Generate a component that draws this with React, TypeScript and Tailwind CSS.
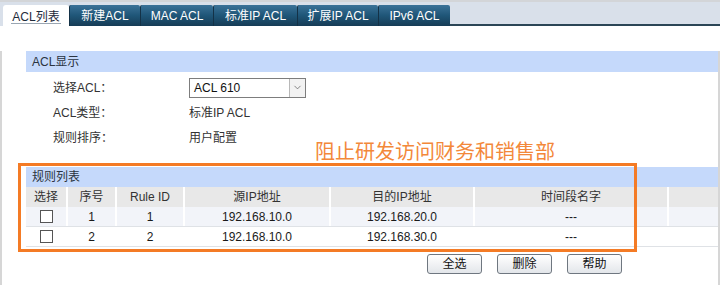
import { ChevronDown } from "lucide-react";

const tabs = ["新建ACL", "MAC ACL", "标准IP ACL", "扩展IP ACL", "IPv6 ACL"];
const tabWidths = ["w-[71px]", "w-[73px]", "w-[84px]", "w-[81px]", "w-[72px]"];

const cols = [
  { name: "选择", w: "w-[40px]" },
  { name: "序号", w: "w-[49px]" },
  { name: "Rule ID", w: "w-[68px]" },
  { name: "源IP地址", w: "w-[146px]" },
  { name: "目的IP地址", w: "w-[144px]" },
  { name: "时间段名字", w: "w-[194px]" },
  { name: "", w: "flex-1" },
];

const rules = [
  { id: 1, src: "192.168.10.0", dst: "192.168.20.0", time: "---" },
  { id: 2, src: "192.168.10.0", dst: "192.168.30.0", time: "---" },
];

function Field({ label, children }: { label: string; children: React.ReactNode }) {
  return (
    <div className="flex items-center h-[25px]">
      <span className="w-[163px] pl-[27px]">{label}</span>
      {children}
    </div>
  );
}

function Btn({ label }: { label: string }) {
  return (
    <button className="w-[55px] h-[20px] rounded-[3px] border border-[#6f7780] bg-gradient-to-b from-white to-[#e3e6ea] text-[12px] text-[#111] leading-none">
      {label}
    </button>
  );
}

export default function App() {
  return (
    <div
      className="relative w-[720px] h-[285px] overflow-hidden bg-white text-[12px] text-[#333]"
      style={{ fontFamily: '"Liberation Sans", "Noto Sans CJK SC", sans-serif' }}
    >
      {/* tab bar */}
      <div className="flex items-end h-[26px] bg-[#d9e0ea] border-t-2 border-[#d3d5d8] pl-[3px]">
        <div className="w-[66px] h-[21px] bg-white rounded-t-[3px] flex justify-center">
          <span className="mt-[3px] h-[16px] border-b border-[#9aa6b2] text-[#1e2a3a] px-[1px]">ACL列表</span>
        </div>
        {tabs.map((t, i) => (
          <div
            key={t}
            className={`${tabWidths[i]} h-[21px] flex items-center justify-center text-white rounded-t-[2px] border-l border-[#143247] bg-gradient-to-b from-[#3b7298] via-[#1f5678] to-[#163c56]`}
          >
            {t}
          </div>
        ))}
        <div className="flex-1 h-[2px] bg-[#2b4656]" />
      </div>

      {/* body */}
      <div className="h-[259px] border-x-2 border-b-2 border-[#d6d6d6] pl-[24px]">
        <div className="mt-[25px] h-[21px] bg-[#c5d9fb] flex items-center pl-[6px] text-[#2b3440]">ACL显示</div>

        <div className="mt-[3px]">
          <Field label="选择ACL：">
            <div className="w-[117px] h-[20px] border border-[#7d7d7d] flex items-center">
              <span className="flex-1 pl-[4px] text-[#111]">ACL 610</span>
              <span className="w-[16px] h-[18px] border-l border-[#b8b8b8] bg-[#f2f2f2] flex items-center justify-center">
                <ChevronDown size={11} strokeWidth={1.5} className="text-[#555]" />
              </span>
            </div>
          </Field>
          <Field label="ACL类型：">
            <span>标准IP ACL</span>
          </Field>
          <Field label="规则排序：">
            <span>用户配置</span>
          </Field>
        </div>

        <div className="mt-[17px] h-[20px] bg-[#c5d9fb] flex items-center pl-[6px] text-[#2b3440]">规则列表</div>

        <div className="flex h-[20px] bg-[#e8e8e8]">
          {cols.map((c, i) => (
            <div
              key={i}
              className={`${c.w} flex items-center justify-center ${i > 0 ? "border-l-2 border-white" : ""}`}
            >
              {c.name}
            </div>
          ))}
        </div>

        {rules.map((r, ri) => (
          <div
            key={r.id}
            className={`flex h-[20px] border-b border-[#dfe2e6] text-[#1a1a1a] ${ri === 0 ? "bg-[#f2f4f9]" : "bg-white"}`}
          >
            <div className="w-[40px] flex items-center justify-center">
              <span className="w-[13px] h-[13px] border border-[#555] bg-white" />
            </div>
            <div className="w-[49px] border-l-2 border-white flex items-center justify-center">{r.id}</div>
            <div className="w-[68px] border-l-2 border-white flex items-center justify-center">{r.id}</div>
            <div className="w-[146px] border-l-2 border-white flex items-center justify-center">{r.src}</div>
            <div className="w-[144px] border-l-2 border-white flex items-center justify-center">{r.dst}</div>
            <div className="w-[194px] border-l-2 border-white flex items-center justify-center">{r.time}</div>
            <div className="flex-1 border-l-2 border-white" />
          </div>
        ))}

        <div className="mt-[7px] flex gap-[15px] pl-[401px]">
          <Btn label="全选" />
          <Btn label="删除" />
          <Btn label="帮助" />
        </div>
      </div>

      {/* annotation overlay */}
      <div className="absolute left-[315px] top-[140px] text-[20px] leading-[24px] text-[#f3883a]">阻止研发访问财务和销售部</div>
      <div className="absolute left-[18px] top-[163px] w-[619px] h-[89px] border-[3px] border-[#f47b25]" />
    </div>
  );
}
